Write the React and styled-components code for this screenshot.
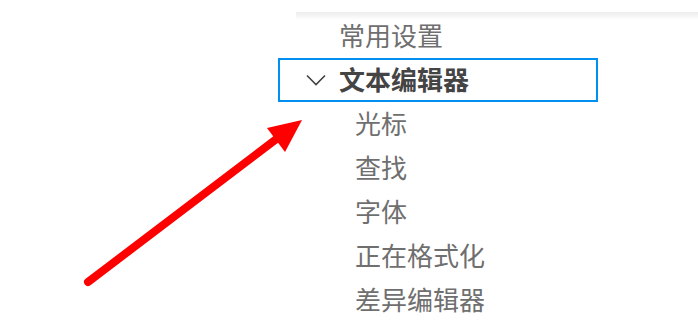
import styled, { createGlobalStyle } from "styled-components";

const GlobalStyle = createGlobalStyle`
  html, body {
    margin: 0;
    padding: 0;
    background: #ffffff;
  }
  body {
    font-family: "Noto Sans CJK SC", "Noto Sans", sans-serif;
  }
`;

const items = [
  { label: "常用设置", level: 0 },
  { label: "文本编辑器", level: 0, expanded: true, focused: true },
  { label: "光标", level: 1 },
  { label: "查找", level: 1 },
  { label: "字体", level: 1 },
  { label: "正在格式化", level: 1 },
  { label: "差异编辑器", level: 1 },
];

const Chevron = () => (
  <svg width="24" height="24" viewBox="0 0 24 24">
    <path
      d="M3 7.5 L12 16.5 L21 7.5"
      fill="none"
      stroke="#424242"
      strokeWidth="1.6"
    />
  </svg>
);

const Arrow = () => (
  <ArrowLayer width="698" height="330" viewBox="0 0 698 330">
    <line
      x1="88"
      y1="282"
      x2="279"
      y2="137"
      stroke="#ff0000"
      strokeWidth="8"
      strokeLinecap="round"
    />
    <polygon points="302,120 267,128 285,152" fill="#ff0000" />
  </ArrowLayer>
);

const App = () => {
  return (
    <Page>
      <GlobalStyle />
      <ScrollShadow />
      <Tree>
        {items.map(item => (
          <Row key={item.label} focused={item.focused}>
            {item.expanded ? (
              <Twistie>
                <Chevron />
              </Twistie>
            ) : null}
            <Label
              level={item.level}
              bold={item.focused}
              twistie={item.expanded}
            >
              {item.label}
            </Label>
          </Row>
        ))}
      </Tree>
      <Arrow />
    </Page>
  );
};

const Page = styled.div`
  position: relative;
  width: 698px;
  height: 330px;
  overflow: hidden;
  padding-top: 14px;
  box-sizing: border-box;
`;

const ScrollShadow = styled.div`
  position: absolute;
  top: 12px;
  left: 296px;
  right: 0;
  height: 8px;
  background: linear-gradient(to bottom, #ececec, rgba(255, 255, 255, 0));
`;

const Tree = styled.div`
  margin-left: 278px;
  width: 320px;
  display: flex;
  flex-direction: column;
`;

const Row = styled.div`
  height: 44px;
  box-sizing: border-box;
  border: 2px solid ${p => (p.focused ? "#0090f1" : "transparent")};
  display: flex;
  align-items: center;
  padding-left: 24px;
  padding-bottom: 3px;
`;

const Twistie = styled.span`
  width: 24px;
  height: 24px;
  margin-top: 3px;
  display: flex;
  align-items: center;
  justify-content: center;
`;

const Label = styled.span`
  font-size: 26px;
  line-height: 40px;
  white-space: nowrap;
  color: ${p => (p.bold ? "#444444" : "#6f6f6f")};
  font-weight: ${p => (p.bold ? 700 : 400)};
  margin-left: ${p => (p.twistie ? 11 : 35 + p.level * 16)}px;
`;

const ArrowLayer = styled.svg`
  position: absolute;
  top: 0;
  left: 0;
  pointer-events: none;
`;

export default App;
